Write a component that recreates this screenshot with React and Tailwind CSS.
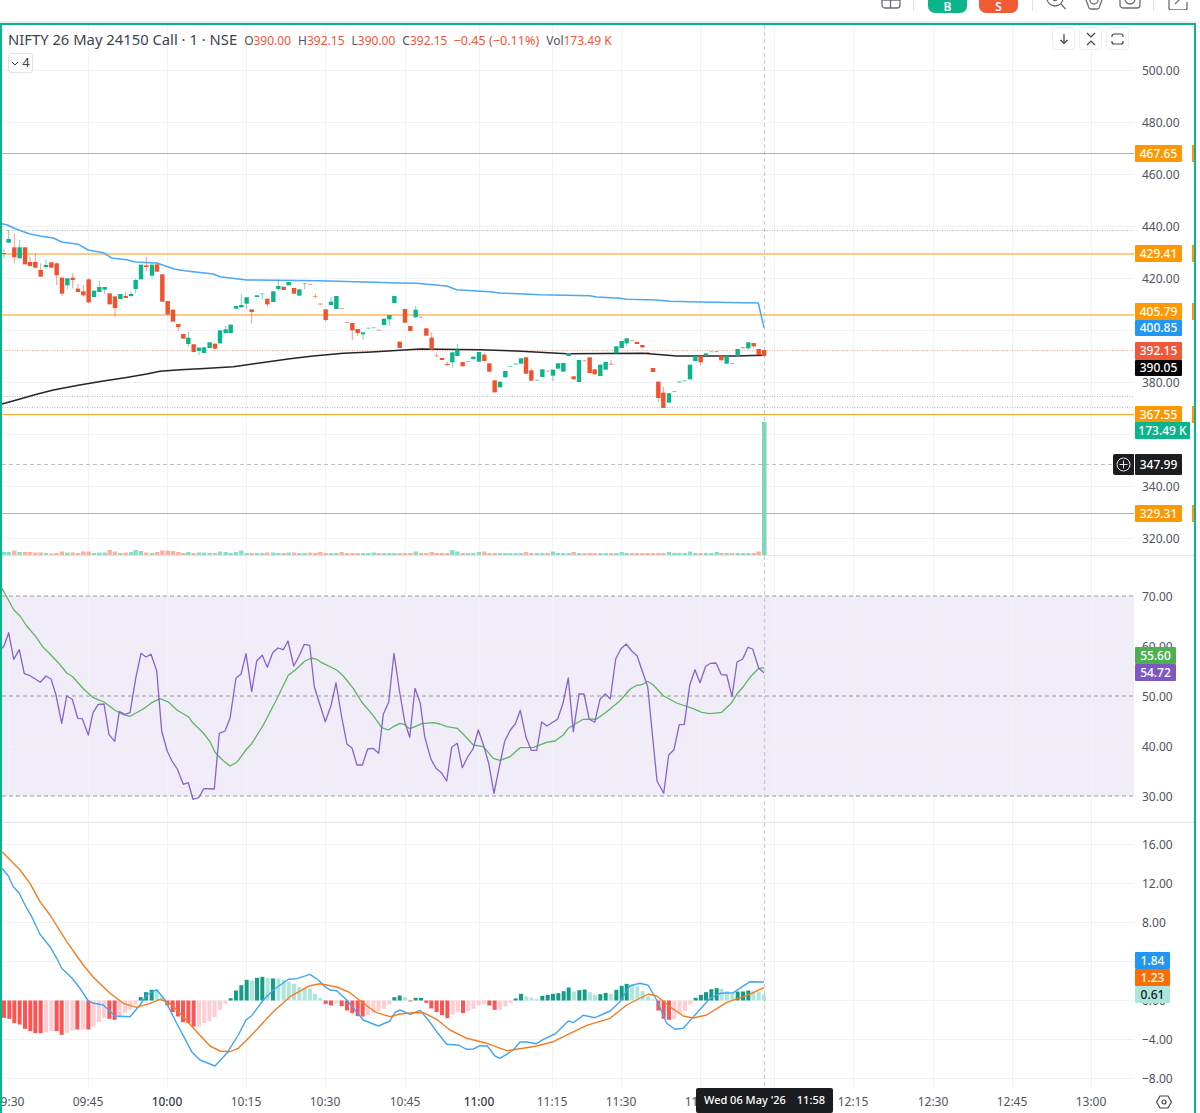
import React from "react";

const GREEN = "#0bb58c";
const RED = "#f1512d";

// [x, bodyTop, bodyBottom, wickTop, wickBottom, colour] in 3x coordinates of each crop
const c1 = [
  [12,99,101,85,115,"g"],[26,57,68,30,68,"g"],[43,82,112,40,130,"r"],[59,82,115,60,115,"g"],[75,82,133,82,133,"r"],[90,126,138,110,140,"r"],[106,126,143,100,146,"r"],[122,150,170,130,170,"r"],[138,135,141,118,147,"g"],[154,127,143,127,143,"r"],[170,130,166,127,195,"r"],[186,173,221,170,228,"r"],[202,175,196,175,207,"g"],[218,173,180,160,205,"r"],[234,206,216,192,216,"r"],[250,214,226,195,230,"r"],[266,178,247,175,250,"r"],[282,212,231,212,231,"g"],[298,201,216,183,216,"g"],[314,201,209,201,222,"g"],[329,220,253,220,253,"r"],[345,229,264,229,290,"r"],[361,222,237,222,237,"g"],[377,228,234,215,234,"r"],[393,222,228,215,232,"g"],[407,180,207,175,220,"g"],[423,134,178,134,178,"g"],[439,136,141,110,155,"r"],[456,134,167,127,177,"g"],[471,133,155,128,155,"r"],[487,163,245,163,245,"r"],[503,243,283,243,288,"r"],[519,269,305,269,305,"r"],[535,312,321,312,335,"r"],[550,342,356,342,356,"r"],[565,353,372,335,382,"g"],[581,373,396,373,396,"r"],[597,383,393,383,405,"g"],[612,382,399,382,399,"g"],[629,367,384,367,384,"g"],[645,371,386,371,386,"r"],[660,331,370,331,370,"g"],[677,328,339,318,340,"g"],[692,314,339,314,339,"g"],[708,258,266,258,266,"g"],[724,255,262,223,262,"g"],[740,232,251,232,268,"g"],[755,268,276,268,311,"r"],[771,226,231,226,231,"g"],[787,220,222,220,238,"G"],[802,236,253,236,261,"r"],[820,214,246,214,246,"g"],[835,198,207,178,213,"g"],[851,200,210,200,210,"r"],[866,186,196,186,196,"g"],[882,204,221,204,221,"r"],[898,208,227,208,227,"g"],[914,189,191,189,207,"G"],[930,192,194,192,194,"R"],[946,228,230,222,236,"R"],[961,250,254,250,254,"R"],[977,268,300,268,306,"r"],[993,245,255,230,255,"g"],[1009,228,267,228,267,"g"],[1025,264,266,264,266,"R"],[1041,306,308,306,308,"R"],[1057,309,331,309,360,"r"],[1073,327,339,327,348,"r"],[1089,337,343,337,360,"g"],[1105,323,326,323,326,"G"],[1121,322,324,322,324,"G"],[1136,329,331,329,331,"R"],[1152,296,315,296,317,"g"],[1168,285,298,285,318,"g"],[1183,228,249,228,249,"g"],
];
const c2 = [
  [-1,185,204,185,204,"r"],[15,87,128,87,128,"r"],[31,138,153,138,153,"r"],[47,89,112,78,112,"g"],[63,110,113,110,113,"R"],[79,145,167,145,167,"r"],[95,173,209,157,209,"r"],[110,226,228,218,230,"R"],[126,234,240,234,240,"r"],[142,252,255,245,258,"r"],[157,217,247,217,264,"g"],[172,209,228,192,228,"g"],[188,246,259,246,259,"r"],[204,243,245,243,245,"G"],[220,230,237,230,241,"g"],[237,216,245,216,245,"g"],[253,224,243,218,243,"r"],[268,250,275,250,275,"r"],[284,301,337,301,337,"r"],[300,305,322,305,322,"g"],[316,273,292,273,292,"g"],[331,258,261,258,261,"G"],[347,250,254,250,254,"G"],[363,235,251,235,251,"g"],[378,232,281,232,281,"r"],[394,271,302,265,302,"r"],[411,299,302,299,302,"G"],[427,268,291,268,291,"g"],[443,272,275,272,275,"R"],[459,269,287,269,304,"g"],[474,250,266,250,266,"g"],[490,249,275,249,275,"g"],[506,219,228,219,228,"g"],[521,289,298,289,298,"r"],[537,240,306,240,306,"g"],[553,241,244,241,244,"R"],[569,232,279,232,279,"r"],[584,268,283,268,283,"r"],[601,254,288,254,288,"g"],[617,246,269,246,269,"g"],[633,251,255,240,255,"R"],[649,199,220,199,220,"g"],[665,183,204,183,204,"g"],[680,175,190,175,198,"g"],[696,180,183,180,183,"R"],[711,186,192,186,192,"r"],[727,195,202,195,205,"r"],[743,216,219,216,219,"R"],[759,264,276,264,276,"r"],[775,305,354,305,367,"r"],[790,338,384,320,384,"r"],[807,340,368,340,368,"g"],[823,333,336,333,336,"G"],[838,304,308,304,308,"G"],[854,301,304,301,304,"G"],[870,254,298,254,298,"g"],[886,228,243,228,243,"g"],[902,228,247,228,255,"r"],[918,220,227,220,227,"g"],[934,214,216,214,216,"G"],[950,213,216,213,216,"G"],[964,227,241,227,241,"r"],[980,227,251,227,251,"g"],[996,249,252,249,252,"R"],[1013,207,228,207,228,"g"],[1029,201,205,201,205,"G"],[1045,187,205,187,209,"g"],[1061,189,199,189,205,"r"],[1076,207,225,207,225,"r"],[1092,210,228,210,228,"r"],
];
const candles = [
  ...c1.map(([x, a, b, c, d, k]) => ({ x: x / 3, t: 220 + a / 3, b: 220 + b / 3, wt: 220 + c / 3, wb: 220 + d / 3, k })),
  ...c2.map(([x, a, b, c, d, k]) => ({ x: 400 + x / 3, t: 280 + a / 3, b: 280 + b / 3, wt: 280 + c / 3, wb: 280 + d / 3, k })),
];

const pts = (list, ox, oy) => list.map(([x, y]) => `${(ox + x / 3).toFixed(1)},${(oy + y / 3).toFixed(1)}`);
const line = (a, b) => [...a, ...b].join(" ");

const blueMA = line(
  pts([[6,11],[20,14],[50,28],[90,42],[120,48],[160,54],[185,66],[235,73],[265,90],[310,98],[335,114],[380,119],[405,126],[470,129],[525,148],[560,153],[640,162],[660,170],[740,180],[960,182],[1200,189]], 0, 220),
  pts([[50,10],[140,18],[170,29],[270,35],[300,39],[420,44],[570,47],[590,51],[660,55],[680,58],[770,60],[810,64],[900,66],[1075,69],[1092,143]], 400, 280)
);
const blackMA = line(
  pts([[6,552],[60,537],[110,523],[160,510],[235,496],[310,483],[375,473],[440,462],[480,454],[540,449],[600,446],[700,440],[800,426],[870,416],[940,408],[1030,400],[1115,396],[1200,391]], 0, 220),
  pts([[60,207],[240,209],[350,213],[500,221],[730,220],[830,228],[1000,228],[1092,226]], 400, 280)
);
const rsi = line(
  pts([[6,325],[12,318],[26,278],[41,358],[58,329],[73,401],[90,407],[105,416],[121,427],[138,408],[153,417],[168,465],[185,550],[200,468],[217,478],[233,535],[247,536],[265,585],[279,518],[295,493],[312,492],[327,584],[344,604],[358,515],[375,523],[390,518],[407,415],[423,340],[438,351],[453,343],[470,392],[485,574],[502,634],[516,663],[532,687],[550,733],[565,728],[579,778],[596,773],[611,746],[643,747],[658,580],[675,573],[690,535],[708,414],[723,403],[738,341],[755,455],[770,363],[787,346],[802,382],[818,338],[834,324],[850,329],[864,303],[881,378],[897,349],[913,313],[929,316],[943,440],[960,495],[976,545],[993,497],[1008,429],[1024,525],[1041,613],[1056,624],[1071,675],[1087,675],[1103,627],[1119,625],[1136,640],[1150,523],[1166,487],[1182,340],[1198,450]], 0, 540),
  pts([[14,365],[29,412],[45,265],[61,310],[74,410],[93,478],[108,505],[124,518],[140,543],[155,442],[172,430],[187,503],[204,469],[219,447],[235,390],[251,437],[266,490],[282,580],[298,500],[314,424],[331,390],[346,372],[361,331],[378,412],[394,451],[410,451],[425,366],[441,378],[473,357],[489,310],[505,234],[520,395],[537,282],[552,282],[568,358],[584,367],[600,298],[616,282],[631,296],[647,177],[663,146],[679,132],[695,153],[711,167],[743,260],[771,543],[791,580],[806,465],[822,449],[838,374],[853,373],[869,256],[885,209],[900,248],[917,199],[932,190],[948,189],[964,224],[980,225],[996,290],[1011,186],[1028,177],[1044,142],[1058,147],[1076,205],[1092,218]], 400, 600)
);
const rsiMA = line(
  pts([[6,145],[20,170],[41,209],[60,228],[80,258],[105,287],[128,320],[150,342],[175,368],[200,399],[218,410],[250,446],[280,473],[312,486],[345,511],[370,524],[390,529],[430,507],[455,488],[480,476],[505,486],[532,511],[565,530],[580,550],[610,579],[630,605],[645,637],[670,662],[690,678],[710,667],[740,627],[755,611],[790,555],[830,478],[865,406],[885,391],[915,363],[935,354],[950,358],[965,368],[1010,390],[1030,408],[1060,445],[1085,486],[1120,527],[1145,563],[1165,570],[1180,560],[1200,550]], 0, 540),
  pts([[14,374],[29,386],[45,380],[65,371],[100,368],[120,372],[140,380],[172,385],[190,403],[220,435],[250,440],[280,475],[300,481],[330,470],[360,443],[400,442],[440,427],[465,423],[490,405],[505,385],[520,375],[550,358],[590,357],[620,335],[660,302],[690,268],[710,256],[725,254],[743,244],[760,255],[790,287],[830,309],[880,326],[905,337],[930,341],[965,337],[995,308],[1010,283],[1030,260],[1050,232],[1075,206],[1092,203]], 400, 600)
);
const macd = line(
  pts([[6,85],[25,108],[40,140],[58,160],[75,195],[95,230],[120,283],[150,320],[170,355],[185,385],[215,413],[240,445],[265,483],[280,490],[310,495],[345,528],[390,530],[420,495],[440,465],[470,449],[495,480],[530,550],[575,635],[600,660],[645,678],[680,640],[715,585],[738,540],[755,527],[790,480],[820,450],[865,418],[890,416],[930,403],[955,420],[975,440],[990,450],[1010,452],[1040,480],[1090,540],[1135,558],[1170,543],[1185,517],[1200,510]], 0, 840),
  pts([[30,193],[60,181],[85,210],[110,245],[140,283],[175,285],[200,298],[220,297],[240,287],[262,288],[285,318],[300,325],[340,300],[360,276],[380,276],[410,281],[430,268],[465,252],[505,213],[520,218],[550,196],[585,203],[630,183],[660,155],[690,107],[720,100],[745,106],[770,150],[800,220],[825,238],[850,235],[885,195],[930,145],[960,130],[1000,128],[1050,95],[1092,96]], 400, 950)
);
const signal = line(
  pts([[6,35],[60,90],[90,130],[120,185],[150,225],[200,305],[250,375],[280,412],[330,460],[370,490],[410,502],[450,490],[480,478],[510,490],[550,530],[590,575],[630,618],[660,633],[690,635],[715,625],[750,590],[820,515],[870,470],[930,437],[960,431],[1010,441],[1050,458],[1090,490],[1130,518],[1170,530],[1200,522]], 0, 840),
  pts([[40,188],[70,188],[110,208],[150,240],[200,265],[260,280],[320,302],[360,296],[410,288],[460,275],[560,226],[630,205],[680,165],[745,132],[770,138],[810,170],[850,198],[880,204],[920,195],[980,157],[1040,137],[1092,113]], 400, 950)
);

// [x, value, strong?]
const h1 = [[12,-52,1],[28,-55,1],[43,-68,1],[59,-72,1],[75,-85,1],[91,-92,1],[106,-98,1],[122,-98,1],[138,-95,0],[154,-92,0],[170,-92,1],[185,-103,1],[201,-97,0],[217,-90,0],[232,-87,1],[249,-87,0],[265,-87,1],[281,-78,0],[297,-65,0],[312,-53,0],[328,-55,1],[344,-58,1],[359,-50,0],[375,-37,0],[391,-28,0],[407,-12,0],[422,10,1],[438,25,1],[455,32,1],[470,32,0],[486,10,0],[502,-15,1],[518,-35,1],[534,-48,1],[549,-65,1],[565,-68,1],[581,-78,1],[597,-78,0],[613,-68,0],[628,-62,0],[644,-50,0],[660,-28,0],[676,-10,0],[692,7,1],[708,30,1],[724,46,1],[740,62,1],[756,60,0],[771,68,1],[787,71,1],[803,68,0],[819,66,1],[835,66,0],[851,62,0],[866,57,0],[882,50,0],[898,40,0],[914,38,0],[930,35,0],[945,20,0],[961,8,0],[977,-10,1],[993,-15,1],[1009,-8,0],[1025,-17,1],[1041,-30,1],[1057,-38,1],[1073,-47,1],[1088,-48,1],[1104,-43,0],[1120,-38,0],[1136,-32,0],[1152,-25,0],[1168,-12,0],[1183,10,1],[1199,15,1]];
const h2 = [[15,10,0],[31,-3,1],[47,8,1],[63,8,1],[79,-7,1],[94,-24,1],[110,-35,1],[126,-44,1],[142,-53,1],[158,-42,0],[173,-35,0],[189,-38,1],[205,-32,0],[220,-25,0],[236,-15,0],[252,-10,0],[268,-15,1],[284,-28,1],[300,-28,0],[316,-18,0],[332,-8,0],[347,6,1],[363,20,1],[379,12,0],[395,8,0],[411,4,0],[427,14,1],[443,17,1],[459,20,1],[475,22,1],[491,28,1],[506,39,1],[522,27,0],[538,31,1],[554,33,1],[570,25,0],[585,17,0],[601,19,1],[617,23,1],[633,20,0],[649,32,1],[665,44,1],[680,50,1],[696,47,0],[712,42,0],[728,28,0],[744,12,0],[760,3,0],[775,-30,1],[791,-55,1],[807,-58,1],[823,-55,0],[839,-40,0],[855,-32,0],[871,-12,0],[887,8,1],[903,17,1],[918,25,1],[934,34,1],[950,37,1],[965,35,0],[981,28,0],[997,23,0],[1013,27,1],[1029,27,1],[1045,30,1],[1060,28,0],[1076,25,0],[1092,18,0]];
const hist = [...h1.map(([x, v, s]) => ({ x: x / 3, v: v / 3, s })), ...h2.map(([x, v, s]) => ({ x: 400 + x / 3, v: v / 3, s }))];

const volHead = [3,3,4.5,3,3,3,2.5,2.5,2,1.5,2,3.5,2.5,2.5,2,3.5,3.5,2,2.5,2.5,5,3.5,2,2.5,3,5,4,2.5,2,3,4.5,4.5,4,3,2,3,2,2.5,2.5,2,2,3.5,3,2,3,4.5,2,2,2,2,2.5,2.5,2,2,2.5,2.5,2,2,2.5,2,3,2,2,2,3,2,2,2,2,2,2.5,2,2,2];
const vol = (i) => (i < volHead.length ? volHead[i] : i === 85 ? 5 : i === 86 ? 3.5 : i % 9 === 0 ? 3 : i % 13 === 0 ? 3.5 : 2);

const vGrid = [9, 88.5, 167.5, 246.5, 325.5, 405.5, 479.5, 552.5, 621.5, 700.5, 774.5, 853.5, 933.5, 1012.5, 1091.5];
const CROSS = 764.5;

const Grid = ({ ys, y1, y2 }) => (
  <g stroke="#f1f2f5" strokeWidth="1">
    {vGrid.map((x) => <line key={x} x1={x} x2={x} y1={y1} y2={y2} />)}
    {ys.map((y) => <line key={y} x1="2" x2="1134" y1={y} y2={y} />)}
  </g>
);
const Cross = ({ y1, y2 }) => <line x1={CROSS} x2={CROSS} y1={y1} y2={y2} stroke="#c9cbd1" strokeWidth="1.2" strokeDasharray="4 3" />;

const Tag = ({ y, h = 17, w = 47, bg, color = "#fff", children }) => (
  <div
    className="absolute left-[1px] flex items-center justify-center rounded-[1px] text-[12px] font-medium"
    style={{ top: y, height: h, width: w, background: bg, color }}
  >
    {children}
  </div>
);
const AxisNum = ({ y, children }) => (
  <div className="absolute left-[8px] -translate-y-1/2 text-[12px] text-[#50535e]" style={{ top: y + 1 }}>{children}</div>
);
const Tick = ({ y }) => <div className="absolute right-0 w-[2px] h-[17px] bg-[#ff9800]" style={{ top: y }} />;

const Ohlc = ({ k, v }) => (
  <span className="ml-[7px]"><span className="text-[#50535e]">{k}</span>{v}</span>
);
const CornerBtn = ({ children }) => (
  <div className="w-[23px] h-[23px] rounded-[4px] bg-white border border-[#eceef2] flex items-center justify-center">{children}</div>
);

const Hist = () => hist.map((b, i) => {
  const pos = b.v > 0;
  const fill = pos ? (b.s ? "#159c84" : "#aee6da") : (b.s ? "#ff5252" : "#ffcdd2");
  return <rect key={i} x={b.x - 2} width="4" y={pos ? 1000.5 - b.v : 1000.5} height={Math.abs(b.v)} fill={fill} />;
});

const times = [
  ["9:30", 12.5], ["09:45", 88], ["10:00", 167, 1], ["10:15", 246], ["10:30", 325], ["10:45", 405], ["11:00", 479, 1], ["11:15", 552], ["11:30", 621], ["11:45", 700], ["12:15", 853], ["12:30", 933], ["12:45", 1012], ["13:00", 1091],
];

const TopIcon = ({ w = 22, h = 22, className = "", children }) => (
  <svg width={w} height={h} viewBox={`0 0 ${w} ${h}`} fill="none" stroke="#6a6d78" strokeWidth="1.3" className={className}>{children}</svg>
);

export default function App() {
  return (
    <div className="w-[1200px] h-[1113px] overflow-hidden bg-white flex flex-col text-[#131722]" style={{ fontFamily: '"Noto Sans", sans-serif' }}>
      {/* clipped top toolbar */}
      <div className="h-[23px] w-[1196px] shrink-0 border-b-2 border-[#eceef0] overflow-hidden flex items-start">
        <TopIcon w={20} h={22} className="ml-[881px] -mt-[13px]">
          <rect x="1" y="0" width="18" height="21" rx="3" /><path d="M9.5 0v21M1 13h18" />
        </TopIcon>
        <div className="w-[1px] h-[11px] bg-[#e0e3eb] ml-[12px]" />
        <div className="w-[39px] h-[13px] ml-[14px] rounded-b-[7px] bg-[#0bb58c] text-white text-[12px] font-semibold flex items-end justify-center leading-[12px]">B</div>
        <div className="w-[39px] h-[13px] ml-[12px] rounded-b-[7px] bg-[#f05a35] text-white text-[12px] font-semibold flex items-end justify-center leading-[12px]">S</div>
        <div className="w-[1px] h-[11px] bg-[#e0e3eb] ml-[14px]" />
        <TopIcon w={20} h={22} className="ml-[13px] -mt-[11px]">
          <circle cx="9" cy="9" r="8" /><path d="M15 15l4.5 5" /><path d="M7 11a4 4 0 0 0 4 0" />
        </TopIcon>
        <TopIcon w={22} h={22} className="ml-[17px] -mt-[11px]">
          <path d="M2 8 L6 19 Q6.500 20 8 20 H14 Q15.500 20 16 19 L20 8" /><circle cx="11" cy="11" r="4" />
        </TopIcon>
        <TopIcon w={22} h={22} className="ml-[14px] -mt-[13px]">
          <rect x="1" y="2" width="20" height="19" rx="3" /><circle cx="11" cy="12" r="5" />
        </TopIcon>
        <div className="w-[1px] h-[11px] bg-[#e0e3eb] ml-[12px]" />
        <TopIcon w={20} h={22} className="ml-[14px] -mt-[12px]">
          <path d="M8 3H3a2 2 0 0 0-2 2v15a2 2 0 0 0 2 2h14a2 2 0 0 0 2-2v-6" /><path d="M7 16L17 6M11 5h6v6" />
        </TopIcon>
      </div>

      {/* framed chart */}
      <div className="w-[1196px] flex-1 min-h-0 border-x-2 border-t-2 border-[#0bb58c] flex flex-col">
        {/* main pane */}
        <div className="h-[531px] shrink-0 flex border-b border-[#e0e3eb]">
          <div className="w-[1132px] relative">
            <svg width="1132" height="530" viewBox="2 25 1132 530" className="block">
              <Grid ys={[70.5, 122.5, 174.5, 226.5, 278.5, 330.5, 382.5, 434.5, 486.5, 538.5]} y1={25} y2={555} />
              <Cross y1={25} y2={422} />
              {[230.5, 396.5, 407.5].map((y) => (
                <line key={y} x1="2" x2="1134" y1={y} y2={y} stroke="#b8bac0" strokeWidth="1" strokeDasharray="1 1.5" />
              ))}
              <line x1="2" x2="1134" y1="350.5" y2="350.5" stroke="#f7a392" strokeWidth="1" strokeDasharray="1 1.5" />
              <line x1="2" x2="1112" y1="464.5" y2="464.5" stroke="#bdbfc5" strokeWidth="1" strokeDasharray="4 3" />
              {[153.5, 254, 315, 414.5, 513.5].map((y, i) => (
                <line key={y} x1="2" x2="1134" y1={y} y2={y} stroke="#ffa22e" strokeOpacity={i === 1 || i === 2 ? 0.75 : 1} strokeWidth={i === 1 || i === 2 ? 1.4 : 1.15} />
              ))}
              {candles.map((c, i) => {
                const v = vol(i);
                const up = c.k === "g" || c.k === "G";
                return <rect key={i} x={c.x - 2.2} width="4.4" y={555 - v} height={v} fill={up ? "#8bdcc8" : "#f9b2a2"} />;
              })}
              <rect x="762" width="4.5" y="422" height="133" fill="#80d5bd" />
              <polyline points={blueMA} fill="none" stroke="#4aa8f5" strokeWidth="1.5" strokeLinejoin="round" />
              <polyline points={blackMA} fill="none" stroke="#23252b" strokeWidth="1.5" strokeLinejoin="round" />
              {candles.map((c, i) => {
                const up = c.k === "g" || c.k === "G";
                const pale = c.k === "G" || c.k === "R";
                const col = up ? GREEN : RED;
                return (
                  <g key={i}>
                    <line x1={c.x} x2={c.x} y1={c.wt} y2={c.wb} stroke={col} strokeOpacity="0.55" strokeWidth="1" />
                    <rect x={c.x - 2.2} width="4.4" y={c.t} height={Math.max(c.b - c.t, 1)} fill={col} fillOpacity={pale ? 0.5 : 1} />
                  </g>
                );
              })}
            </svg>

            {/* legend */}
            <div className="absolute left-[6px] top-[3px] flex items-baseline whitespace-nowrap text-[12px] text-[#f1543a]">
              <span className="text-[14.8px] text-[#3e4250]">NIFTY 26 May 24150 Call · 1 · NSE</span>
              <Ohlc k="O" v="390.00" /><Ohlc k="H" v="392.15" /><Ohlc k="L" v="390.00" /><Ohlc k="C" v="392.15" />
              <span className="ml-[6px] text-[12.6px]">−0.45 (−0.11%)</span>
              <Ohlc k="Vol" v="173.49 K" />
            </div>
            <div className="absolute left-[6px] top-[28px] w-[25px] h-[20px] rounded-[3px] border border-[#e0e3e8] bg-white flex items-center justify-center gap-[3px] text-[13px] text-[#3e4250]">
              <svg width="8" height="5" viewBox="0 0 8 5" fill="none" stroke="#3e4250" strokeWidth="1"><path d="M1 1l3 3 3-3" /></svg>
              4
            </div>
            <div className="absolute left-[1050px] top-[2px] flex gap-[4px]">
              <CornerBtn>
                <svg width="12" height="12" viewBox="0 0 12 12" fill="none" stroke="#3e4250" strokeWidth="1.2"><path d="M6 1v9.500M2.500 7L6 10.500 9.500 7" /></svg>
              </CornerBtn>
              <CornerBtn>
                <svg width="12" height="14" viewBox="0 0 12 14" fill="none" stroke="#3e4250" strokeWidth="1.2"><path d="M2 1l4 4 4-4M2 13l4-4 4 4" /></svg>
              </CornerBtn>
              <CornerBtn>
                <svg width="13" height="12" viewBox="0 0 13 12" fill="none" stroke="#3e4250" strokeWidth="1.2"><path d="M1 4V3a2 2 0 0 1 2-2h7a2 2 0 0 1 2 2v1M1 8v1a2 2 0 0 0 2 2h7a2 2 0 0 0 2-2V8" /></svg>
              </CornerBtn>
            </div>
            <div className="absolute left-[1111px] top-[429px] w-[21px] h-[21px] bg-[#1c1d20] rounded-l-[2px] flex items-center justify-center">
              <svg width="15" height="15" viewBox="0 0 15 15" fill="none" stroke="#e8e8e8" strokeWidth="1"><circle cx="7.500" cy="7.500" r="6.500" /><path d="M7.500 3.500v8M3.500 7.500h8" /></svg>
            </div>
          </div>
          <div className="w-[60px] relative">
            {[[70, "500.00"], [122, "480.00"], [174, "460.00"], [226, "440.00"], [278, "420.00"], [382, "380.00"], [486, "340.00"], [538, "320.00"]].map(([y, t]) => (
              <AxisNum key={t} y={y - 25}>{t}</AxisNum>
            ))}
            <Tag y={120} bg="#ff9800">467.65</Tag><Tick y={120} />
            <Tag y={220} bg="#ff9800">429.41</Tag><Tick y={220} />
            <Tag y={278} bg="#ff9800">405.79</Tag><Tick y={278} />
            <Tag y={295} h={16} bg="#2196f3">400.85</Tag>
            <Tag y={317} h={18} bg="#f1573a">392.15</Tag>
            <Tag y={335} h={16} bg="#000">390.05</Tag>
            <Tag y={381} bg="#ff9800">367.55</Tag><Tick y={381} />
            <Tag y={397} w={55} bg="#0bb58c">173.49 K</Tag>
            <Tag y={429} h={21} bg="#1c1d20">347.99</Tag>
            <Tag y={480} bg="#ff9800">329.31</Tag><Tick y={480} />
          </div>
        </div>

        {/* RSI pane */}
        <div className="h-[267px] shrink-0 flex border-b border-[#e0e3eb]">
          <div className="w-[1132px]">
            <svg width="1132" height="266" viewBox="2 556 1132 266" className="block">
              <rect x="2" y="596" width="1132" height="200" fill="#f0edf8" />
              <Grid ys={[646.5, 746.5]} y1={556} y2={822} />
              <g fill="none" stroke="#9a98a3" strokeWidth="1" strokeDasharray="4 3">
                <line x1="2" x2="1134" y1="596" y2="596" />
                <line x1="2" x2="1134" y1="696" y2="696" />
                <line x1="2" x2="1134" y1="796" y2="796" />
              </g>
              <Cross y1={556} y2={822} />
              <polyline points={rsiMA} fill="none" stroke="#5cb660" strokeWidth="1.3" strokeLinejoin="round" />
              <polyline points={rsi} fill="none" stroke="#8763cc" strokeWidth="1.3" strokeLinejoin="round" />
            </svg>
          </div>
          <div className="w-[60px] relative">
            {[[596, "70.00"], [646, "60.00"], [696, "50.00"], [746, "40.00"], [796, "30.00"]].map(([y, t]) => (
              <AxisNum key={t} y={y - 556}>{t}</AxisNum>
            ))}
            <Tag y={91} w={41} bg="#4caf50">55.60</Tag>
            <Tag y={108} w={41} bg="#7e57c2">54.72</Tag>
          </div>
        </div>

        {/* MACD pane */}
        <div className="h-[264px] shrink-0 flex">
          <div className="w-[1132px] relative">
            <svg width="1132" height="264" viewBox="2 823 1132 264" className="block">
              <Grid ys={[844.5, 883.5, 922.5, 961.5, 1000.5, 1039.5, 1078.5]} y1={823} y2={1087} />
              <Hist />
              <Cross y1={823} y2={1087} />
              <polyline points={macd} fill="none" stroke="#42a5f5" strokeWidth="1.4" strokeLinejoin="round" />
              <polyline points={signal} fill="none" stroke="#f57c1f" strokeWidth="1.4" strokeLinejoin="round" />
            </svg>
          </div>
          <div className="w-[60px] relative">
            {[[844, "16.00"], [883, "12.00"], [922, "8.00"], [1000, "0.00"], [1039, "−4.00"], [1078, "−8.00"]].map(([y, t]) => (
              <AxisNum key={t} y={y - 823}>{t}</AxisNum>
            ))}
            <Tag y={129} w={35} bg="#2196f3">1.84</Tag>
            <Tag y={146} w={35} bg="#ff6d00">1.23</Tag>
            <Tag y={163} w={35} bg="#ace5dc" color="#131722">0.61</Tag>
          </div>
        </div>

        {/* time axis */}
        <div className="relative flex-1 min-h-0 overflow-hidden">
          {times.map(([t, x, b]) => (
            <span
              key={t}
              className={`absolute top-[6px] -translate-x-1/2 text-[12px] ${b ? "font-medium text-[#3a3d48]" : "text-[#50535e]"}`}
              style={{ left: x - 2 }}
            >
              {t}
            </span>
          ))}
          <div className="absolute left-[694px] top-[1px] w-[137px] h-[25px] bg-[#1c1d20] rounded-[2px] text-white text-[11px] font-medium flex items-center justify-between px-[8px] whitespace-nowrap">
            <span>Wed 06 May '26</span><span>11:58</span>
          </div>
          <svg width="18" height="18" viewBox="0 0 18 18" fill="none" stroke="#3e4250" strokeWidth="1.2" className="absolute left-[1153px] top-[6px]">
            <path d="M1.500 9L5 3h8l3.500 6L13 15H5z" strokeLinejoin="round" /><circle cx="9" cy="9" r="2" />
          </svg>
        </div>
      </div>
    </div>
  );
}
